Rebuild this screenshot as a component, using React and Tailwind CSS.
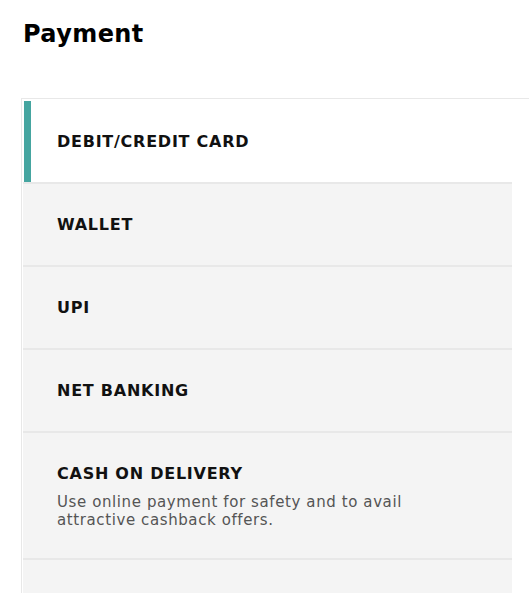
export default function App() {
  const items = [
    { label: "DEBIT/CREDIT CARD", active: true },
    { label: "WALLET" },
    { label: "UPI" },
    { label: "NET BANKING" },
    {
      label: "CASH ON DELIVERY",
      desc: "Use online payment for safety and to avail attractive cashback offers.",
    },
  ];
  return (
    <div
      className="min-h-[593px] bg-white text-[#111]"
      style={{ fontFamily: '"DejaVu Sans", "Noto Sans", sans-serif' }}
    >
      <h1 className="pl-[23px] pt-[19px] text-[24px] font-bold leading-[31px] tracking-[0.4px] text-black">
        Payment
      </h1>
      <div className="mt-[48px] ml-[21px] border-l border-t border-[#e8e8e8] pt-[2px] pl-[1px]">
        <div className="w-[489px]">
          {items.map((it) => (
            <div
              key={it.label}
              className={
                "relative border-b-2 border-[#e8e8e8] py-[30px] pl-[34px] pr-4 " +
                (it.active ? "bg-white" : "bg-[#f4f4f4]")
              }
            >
              {it.active && (
                <div className="absolute left-[1px] top-0 bottom-0 w-[7px] bg-[#45a5a0]" />
              )}
              <div className="text-[16px] font-bold leading-[21px] tracking-[0.75px] text-[#111]">
                {it.label}
              </div>
              {it.desc && (
                <div className="mt-[9px] mb-[-1px] w-[380px] text-[15px] leading-[18px] tracking-[0.6px] text-[#555]">
                  {it.desc}
                </div>
              )}
            </div>
          ))}
          <div className="h-[40px] bg-[#f4f4f4]" />
        </div>
      </div>
    </div>
  );
}
